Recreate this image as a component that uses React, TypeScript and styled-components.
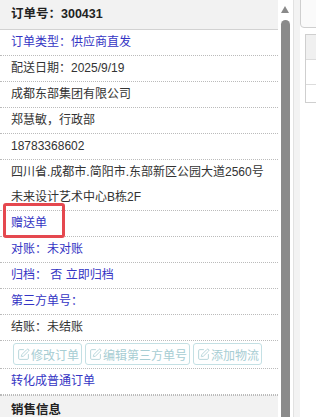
import React from 'react';
import styled, { createGlobalStyle } from 'styled-components';
import { SquarePen } from 'lucide-react';

const GlobalStyle = createGlobalStyle`
  html, body {
    margin: 0;
    padding: 0;
    background: #fff;
  }
  body {
    font-family: "Liberation Sans", "Noto Sans CJK SC", sans-serif;
    font-size: 12px;
    color: #333;
  }
`;

const Page = styled.div`
  display: flex;
  height: 417px;
  overflow: hidden;
  background: #fff;
`;

const Panel = styled.div`
  width: 278px;
  flex: none;
  display: flex;
  flex-direction: column;
`;

const SectionHeader = styled.div<{ $top?: boolean }>`
  height: 29px;
  line-height: 29px;
  padding: 0 11px;
  background: #f2f2f2;
  font-weight: bold;
  font-size: 12.5px;
  color: #222;
  border-bottom: ${p => (p.$top ? '1px solid #d2d2d2' : 'none')};
  border-top: ${p => (p.$top ? 'none' : '1px dotted #bbb')};
  flex: none;
`;

const Row = styled.div<{ $link?: boolean }>`
  position: relative;
  padding: 0 11px;
  line-height: 25px;
  border-bottom: 1px dotted #bbb;
  color: ${p => (p.$link ? '#3434c4' : '#333')};
  flex: none;
`;

const Mark = styled.div`
  position: absolute;
  left: 3px;
  top: -8px;
  width: 56px;
  height: 29px;
  border: 3px solid #e5484f;
  border-radius: 3px;
  pointer-events: none;
`;

const ButtonRow = styled.div`
  display: flex;
  gap: 3px;
  padding: 2px 13px 3px;
  border-bottom: 1px dotted #bbb;
  flex: none;
`;

const GhostButton = styled.button`
  display: flex;
  flex: none;
  align-items: center;
  gap: 1px;
  height: 22px;
  padding: 0 2px 0 3px;
  border: 1px solid #c4e0e4;
  border-radius: 3px;
  background: #fff;
  color: #a7cdd3;
  font-family: inherit;
  font-size: 12px;
  white-space: nowrap;
  cursor: default;
`;

const ScrollTrack = styled.div`
  width: 15px;
  flex: none;
  display: flex;
  flex-direction: column;
  padding-left: 3px;
  box-sizing: border-box;
`;

const UpArrow = styled.div`
  width: 0;
  height: 0;
  margin: 6px 0 0 0;
  border-left: 4.5px solid transparent;
  border-right: 4.5px solid transparent;
  border-bottom: 7px solid #8a8a8a;
`;

const Thumb = styled.div`
  width: 9px;
  flex: 1;
  margin-top: 7px;
  background: #8a8a8a;
  border-radius: 5px 5px 0 0;
`;

const Gutter = styled.div`
  width: 7px;
  flex: none;
  border-left: 1px solid #e2e2e2;
  background: #f3f3f3;
  box-sizing: border-box;
`;

const RightPane = styled.div`
  flex: 1;
  display: flex;
  flex-direction: column;
  overflow: hidden;
`;

const Tab = styled.div`
  height: 30px;
  margin-top: -4px;
  margin-right: -10px;
  border: 1px solid #cfcfcf;
  border-radius: 4px;
  background: #fafafa;
  flex: none;
`;

const Table = styled.div`
  margin: 6px -10px 0 5px;
  border: 1px solid #cfcfcf;
  display: flex;
  flex-direction: column;
`;

const TableRow = styled.div<{ $head?: boolean; $h: number }>`
  height: ${p => p.$h}px;
  background: ${p => (p.$head ? '#f0f0f0' : '#fff')};
  border-top: 1px solid #dcdcdc;
  &:first-child {
    border-top: none;
  }
`;

const App = () => {
  return (
    <>
      <GlobalStyle />
      <Page>
        <Panel>
          <SectionHeader $top>订单号：300431</SectionHeader>
          <Row $link>订单类型：供应商直发</Row>
          <Row>配送日期：2025/9/19</Row>
          <Row>成都东部集团有限公司</Row>
          <Row>郑慧敏，行政部</Row>
          <Row>18783368602</Row>
          <Row>
            四川省.成都市.简阳市.东部新区公园大道2560号
            <br />
            未来设计艺术中心B栋2F
          </Row>
          <Row $link>
            赠送单
            <Mark />
          </Row>
          <Row $link>对账：未对账</Row>
          <Row $link>归档： 否 立即归档</Row>
          <Row $link>第三方单号：</Row>
          <Row>结账：未结账</Row>
          <ButtonRow>
            <GhostButton>
              <SquarePen size={13} strokeWidth={1.5} />
              修改订单
            </GhostButton>
            <GhostButton>
              <SquarePen size={13} strokeWidth={1.5} />
              编辑第三方单号
            </GhostButton>
            <GhostButton>
              <SquarePen size={13} strokeWidth={1.5} />
              添加物流
            </GhostButton>
          </ButtonRow>
          <Row $link>转化成普通订单</Row>
          <SectionHeader>销售信息</SectionHeader>
        </Panel>
        <ScrollTrack>
          <UpArrow />
          <Thumb />
        </ScrollTrack>
        <Gutter />
        <RightPane>
          <Tab />
          <Table>
            <TableRow $head $h={24} />
            <TableRow $h={24} />
            <TableRow $h={17} />
          </Table>
        </RightPane>
      </Page>
    </>
  );
};

export default App;
